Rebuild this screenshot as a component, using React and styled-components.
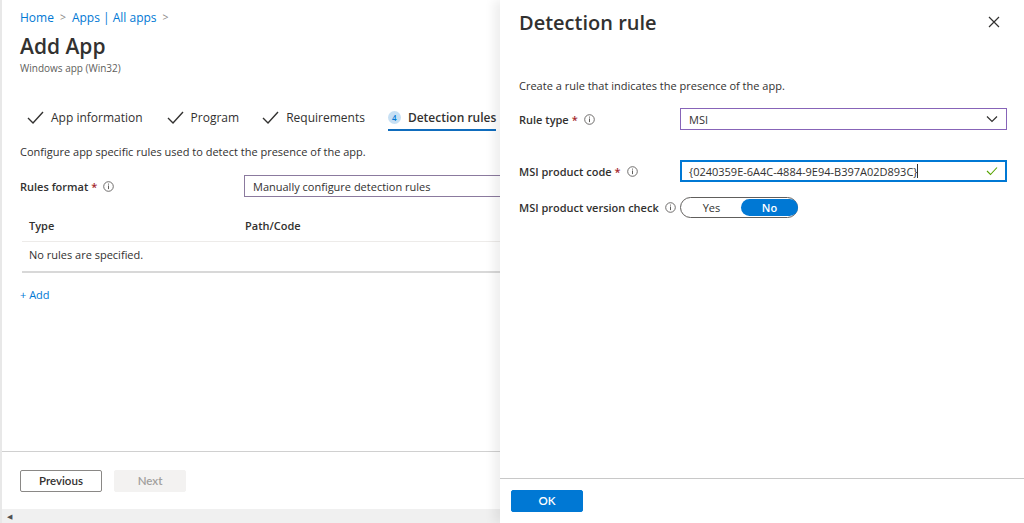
import React from "react";
import styled, { createGlobalStyle } from "styled-components";

const GlobalStyle = createGlobalStyle`
  html, body {
    margin: 0;
    padding: 0;
    height: 100%;
    overflow: hidden;
    background: #ffffff;
  }
  body {
    font-family: "Open Sans", "Noto Sans", sans-serif;
    color: #323130;
  }
`;

const Screen = styled.div`
  display: flex;
  width: 1024px;
  height: 523px;
  overflow: hidden;
`;

/* ---------- left page ---------- */

const Page = styled.div`
  width: 500px;
  flex-shrink: 0;
  display: flex;
  flex-direction: column;
  border-left: 2px solid #e8e8e8;
  box-sizing: border-box;
  overflow: hidden;
`;

const PageBody = styled.div`
  flex: 1;
  padding: 8px 0 0 18px;
`;

const Breadcrumb = styled.div`
  display: flex;
  align-items: center;
  gap: 6px;
  height: 18px;
`;

const Crumb = styled.span`
  color: ${(p) => (p.sep ? "#8a8886" : "#0078d4")};
  font-size: ${(p) => (p.sep ? "10.5px" : "12px")};
`;

const Title = styled.h1`
  margin: 8px 0 0;
  font-size: 21px;
  font-weight: 600;
  line-height: 24px;
  color: #323130;
`;

const Subtitle = styled.div`
  font-size: 10px;
  color: #605e5c;
  line-height: 14px;
  margin-top: 3px;
`;

const Tabs = styled.div`
  display: flex;
  align-items: center;
  margin-top: 28px;
  white-space: nowrap;
`;

const Tab = styled.div`
  display: flex;
  align-items: center;
  gap: 7px;
  height: 28px;
  margin-left: ${(p) => p.ml || 0}px;
  padding-top: 2px;
  font-size: 12px;
  font-weight: ${(p) => (p.active ? 600 : 400)};
  color: #323130;
  border-bottom: 2px solid ${(p) => (p.active ? "#0f6cbd" : "transparent")};
  box-sizing: border-box;
`;

const StepNum = styled.span`
  width: 13px;
  height: 13px;
  border-radius: 50%;
  background: #c7e0f4;
  color: #0078d4;
  font-size: 8px;
  display: inline-flex;
  align-items: center;
  justify-content: center;
  font-weight: 600;
`;

const Desc = styled.div`
  font-size: 11px;
  color: #323130;
  margin-top: ${(p) => p.mt || 0}px;
  line-height: 16px;
`;

const FieldRow = styled.div`
  display: grid;
  grid-template-columns: ${(p) => p.labelWidth}px ${(p) => p.fieldWidth}px;
  align-items: center;
  margin-top: ${(p) => p.mt || 0}px;
`;

const Label = styled.div`
  display: flex;
  align-items: center;
  gap: 6px;
  font-size: 11px;
  font-weight: 600;
  color: #323130;
  white-space: nowrap;
`;

const Req = styled.span`
  color: #a4262c;
  margin-left: -3px;
`;

const Box = styled.div`
  height: 22px;
  box-sizing: border-box;
  border: ${(p) => (p.thick ? "2px" : "1px")} solid ${(p) => p.border || "#8a8886"};
  display: flex;
  align-items: center;
  justify-content: space-between;
  padding: 0 ${(p) => (p.thick ? "7px" : "8px")};
  font-size: 11px;
  color: #323130;
  white-space: nowrap;
`;

const Table = styled.div`
  margin-top: 12px;
  width: 482px;
  margin-left: 2px;
`;

const TableRow = styled.div`
  display: grid;
  grid-template-columns: 216px 1fr;
  align-items: ${(p) => (p.head ? "center" : "start")};
  height: ${(p) => p.h}px;
  box-sizing: border-box;
  padding: ${(p) => (p.head ? "0" : "5px")} 0 0 7px;
  font-size: 11px;
  font-weight: ${(p) => (p.head ? 600 : 400)};
  color: #323130;
  border-bottom: ${(p) => p.line};
`;

const AddLink = styled.div`
  margin-top: 14px;
  font-size: 11px;
  color: #0078d4;
`;

const PageFooter = styled.div`
  height: 57px;
  border-top: 1px solid #d0d0d0;
  display: flex;
  align-items: center;
  gap: 12px;
  padding-left: 18px;
`;

const Button = styled.button`
  height: 22px;
  width: ${(p) => p.w}px;
  box-sizing: border-box;
  font-family: "Lato", "Open Sans", sans-serif;
  font-size: 11.5px;
  font-weight: 600;
  border-radius: 2px;
  border: 1px solid ${(p) => (p.variant === "primary" ? "#0078d4" : p.variant === "disabled" ? "#f3f2f1" : "#8a8886")};
  background: ${(p) => (p.variant === "primary" ? "#0078d4" : p.variant === "disabled" ? "#f3f2f1" : "#ffffff")};
  color: ${(p) => (p.variant === "primary" ? "#ffffff" : p.variant === "disabled" ? "#a19f9d" : "#323130")};
  padding: 0;
`;

const Scrollbar = styled.div`
  height: 14px;
  background: #f0f0f0;
  display: flex;
  align-items: center;
  padding-left: 5px;
  font-size: 7px;
  color: #505050;
`;

/* ---------- right panel ---------- */

const Panel = styled.div`
  flex: 1;
  display: flex;
  flex-direction: column;
  position: relative;
  box-shadow: -6px 0 10px rgba(0, 0, 0, 0.07);
  background: #ffffff;
  z-index: 1;
`;

const PanelHeader = styled.div`
  display: flex;
  justify-content: space-between;
  align-items: center;
  padding: 8px 24px 0 19px;
  height: 28px;
`;

const PanelTitle = styled.h2`
  margin: 0;
  font-size: 20px;
  font-weight: 600;
  color: #323130;
`;

const PanelBody = styled.div`
  flex: 1;
  padding: 0 17px 0 19px;
`;

const Toggle = styled.div`
  width: 118px;
  height: 21px;
  box-sizing: border-box;
  border: 1px solid #605e5c;
  border-radius: 11px;
  display: grid;
  grid-template-columns: 59px 57px;
  align-items: center;
  padding: 1px;
  font-size: 11px;
`;

const ToggleOpt = styled.div`
  height: 17px;
  border-radius: 9px;
  display: flex;
  align-items: center;
  justify-content: center;
  background: ${(p) => (p.on ? "#0078d4" : "transparent")};
  color: ${(p) => (p.on ? "#ffffff" : "#323130")};
  font-weight: ${(p) => (p.on ? 600 : 400)};
`;

const Caret = styled.span`
  display: inline-block;
  width: 1px;
  height: 14px;
  background: #323130;
`;

const CodeText = styled.span`
  display: flex;
  align-items: center;
`;

const PanelFooter = styled.div`
  height: 43px;
  border-top: 1px solid #c8c8c8;
  display: flex;
  align-items: center;
  padding-left: 11px;
  padding-bottom: 1px;
`;

const Check = () => (
  <svg width="17" height="13" viewBox="0 0 17 13">
    <path d="M1 7 L6 12 L16 1" fill="none" stroke="#323130" strokeWidth="1.4" />
  </svg>
);

const Info = () => (
  <svg width="11" height="11" viewBox="0 0 11 11">
    <circle cx="5.5" cy="5.5" r="4.8" fill="none" stroke="#605e5c" strokeWidth="0.9" />
    <rect x="5" y="4.5" width="1" height="3.6" fill="#605e5c" />
    <rect x="5" y="2.6" width="1" height="1" fill="#605e5c" />
  </svg>
);

const Chevron = () => (
  <svg width="12" height="8" viewBox="0 0 12 8">
    <path d="M1 1.5 L6 6.5 L11 1.5" fill="none" stroke="#323130" strokeWidth="1.2" />
  </svg>
);

const CloseX = () => (
  <svg width="12" height="12" viewBox="0 0 12 12">
    <path d="M1 1 L11 11 M11 1 L1 11" fill="none" stroke="#323130" strokeWidth="1.2" />
  </svg>
);

const Valid = () => (
  <svg width="12" height="10" viewBox="0 0 12 10">
    <path d="M1 5 L4.5 8.5 L11 1.5" fill="none" stroke="#57a300" strokeWidth="1.1" />
  </svg>
);

export default function App() {
  return (
    <>
      <GlobalStyle />
      <Screen>
        <Page>
          <PageBody>
            <Breadcrumb>
              <Crumb>Home</Crumb>
              <Crumb sep>&gt;</Crumb>
              <Crumb>Apps | All apps</Crumb>
              <Crumb sep>&gt;</Crumb>
            </Breadcrumb>
            <Title>Add App</Title>
            <Subtitle>Windows app (Win32)</Subtitle>
            <Tabs>
              <Tab ml={7}>
                <Check />
                App information
              </Tab>
              <Tab ml={24}>
                <Check />
                Program
              </Tab>
              <Tab ml={23}>
                <Check />
                Requirements
              </Tab>
              <Tab ml={23} active>
                <StepNum>4</StepNum>
                Detection rules
              </Tab>
            </Tabs>
            <Desc mt={13}>Configure app specific rules used to detect the presence of the app.</Desc>
            <FieldRow labelWidth={224} fieldWidth={300} mt={15}>
              <Label>
                Rules format <Req>*</Req> <Info />
              </Label>
              <Box border="#8b7a9e">Manually configure detection rules</Box>
            </FieldRow>
            <Table>
              <TableRow head h={33} line="1px solid #edebe9">
                <span>Type</span>
                <span>Path/Code</span>
              </TableRow>
              <TableRow h={31} line="2px solid #d8d8d8">
                <span>No rules are specified.</span>
              </TableRow>
            </Table>
            <AddLink>+ Add</AddLink>
          </PageBody>
          <PageFooter>
            <Button w={82}>Previous</Button>
            <Button w={72} variant="disabled">
              Next
            </Button>
          </PageFooter>
          <Scrollbar>◀</Scrollbar>
        </Page>

        <Panel>
          <PanelHeader>
            <PanelTitle>Detection rule</PanelTitle>
            <CloseX />
          </PanelHeader>
          <PanelBody>
            <Desc mt={42}>Create a rule that indicates the presence of the app.</Desc>
            <FieldRow labelWidth={161} fieldWidth={327} mt={14}>
              <Label>
                Rule type <Req>*</Req> <Info />
              </Label>
              <Box border="#8764b8">
                MSI
                <Chevron />
              </Box>
            </FieldRow>
            <FieldRow labelWidth={161} fieldWidth={327} mt={30}>
              <Label>
                MSI product code <Req>*</Req> <Info />
              </Label>
              <Box border="#0078d4" thick>
                <CodeText>
                  {"{0240359E-6A4C-4884-9E94-B397A02D893C}"}
                  <Caret />
                </CodeText>
                <Valid />
              </Box>
            </FieldRow>
            <FieldRow labelWidth={161} fieldWidth={327} mt={15}>
              <Label>
                MSI product version check <Info />
              </Label>
              <Toggle>
                <ToggleOpt>Yes</ToggleOpt>
                <ToggleOpt on>No</ToggleOpt>
              </Toggle>
            </FieldRow>
          </PanelBody>
          <PanelFooter>
            <Button w={72} variant="primary">
              OK
            </Button>
          </PanelFooter>
        </Panel>
      </Screen>
    </>
  );
}
